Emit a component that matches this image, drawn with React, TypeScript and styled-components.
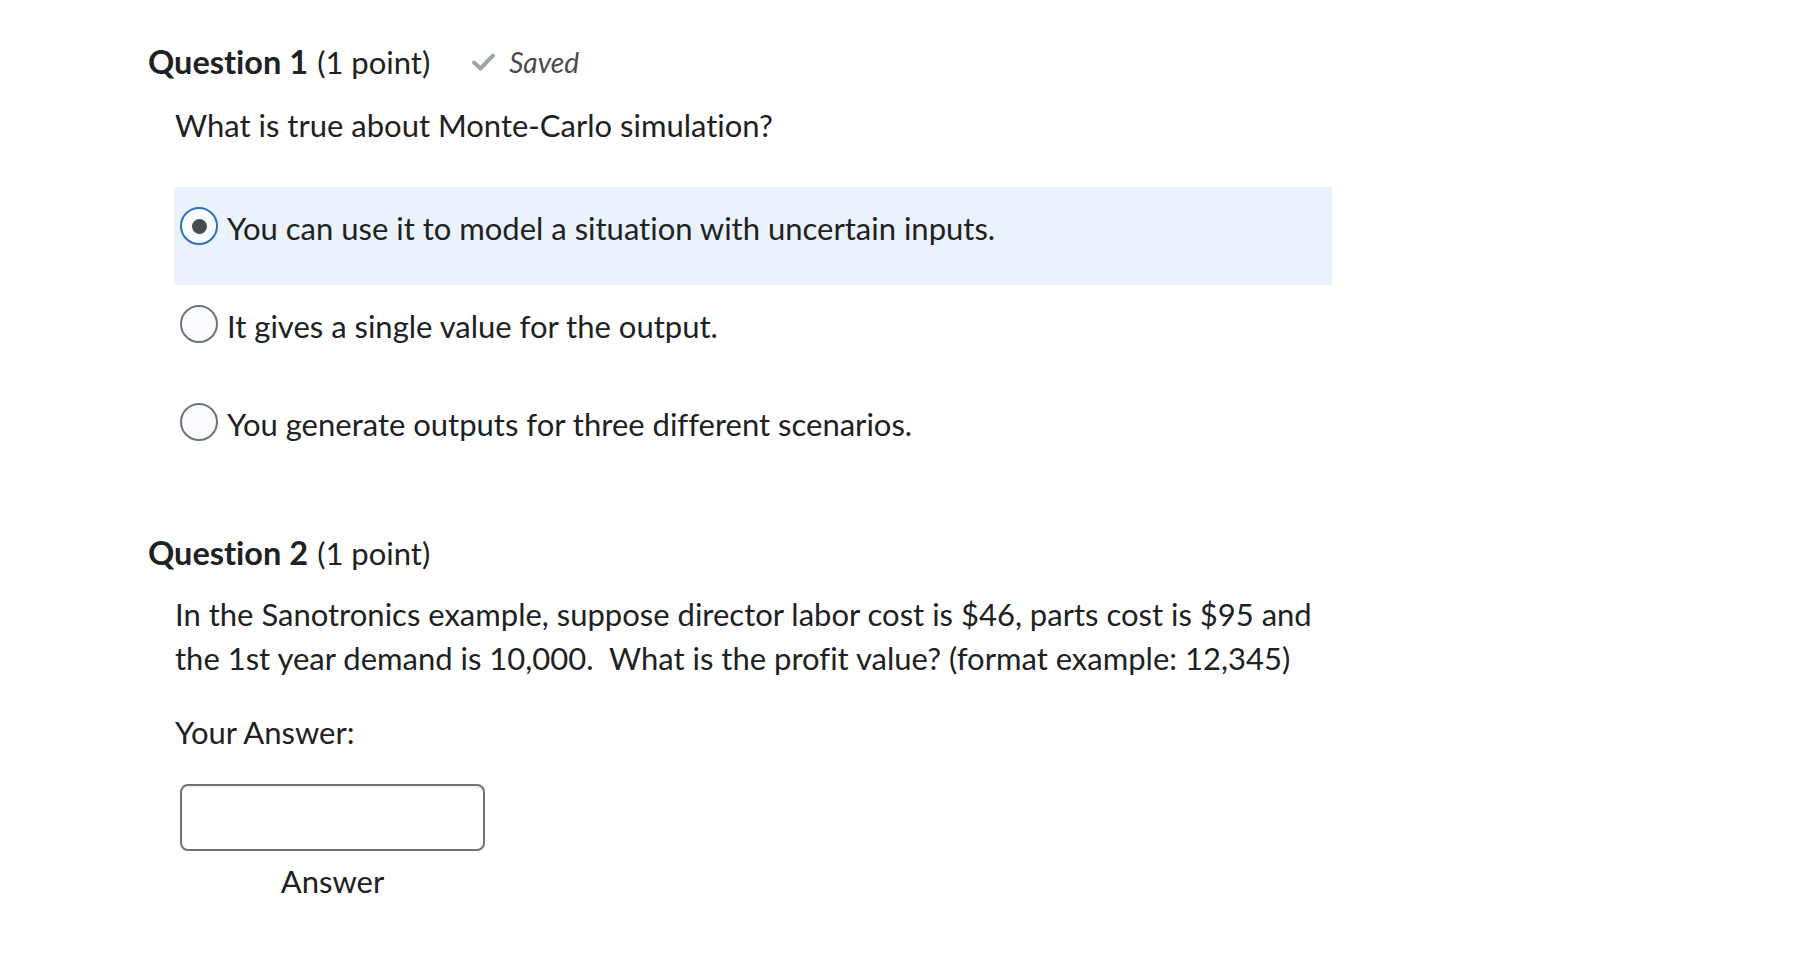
import React from "react";
import styled, { createGlobalStyle } from "styled-components";

const Global = createGlobalStyle`
  html, body { margin: 0; padding: 0; background: #ffffff; }
  body {
    font-family: Lato, "Noto Sans", sans-serif;
    color: #202122;
    font-variant-ligatures: none;
  }
`;

const Page = styled.main`
  padding: 40px 0 60px 148px;
  width: 1200px;
`;

const QuestionHeader = styled.h2<{ $top?: number }>`
  margin: ${(p) => p.$top ?? 0}px 0 0 0;
  display: flex;
  align-items: center;
  font-size: 31px;
  line-height: 44px;
  font-weight: 400;
  color: #202122;
`;

const Strong = styled.span`
  font-weight: 700;
  font-size: 32.5px;
  margin-right: 9px;
`;

const SavedTag = styled.span`
  display: inline-flex;
  align-items: center;
  margin-left: 41px;
  gap: 13px;
  font-style: italic;
  font-size: 28px;
  color: #494c4e;
`;

const Indented = styled.div`
  margin-left: 28px;
`;

const Prompt = styled.p<{ $top: number }>`
  margin: ${(p) => p.$top}px 0 0 -1px;
  font-size: 31px;
  line-height: 44px;
  width: 1160px;
`;

const OptionList = styled.div`
  margin-top: 40px;
  width: 1158px;
  margin-left: -2px;
  display: flex;
  flex-direction: column;
`;

const OptionRow = styled.label<{ $selected?: boolean }>`
  height: 98px;
  box-sizing: border-box;
  padding: 20px 0 0 6px;
  display: flex;
  align-items: flex-start;
  gap: 9px;
  background: ${(p) => (p.$selected ? "#eaf2fb" : "transparent")};
  font-size: 31px;
  line-height: 38px;
`;

const Radio = styled.span<{ $checked?: boolean }>`
  flex: none;
  width: 38px;
  height: 38px;
  box-sizing: border-box;
  border-radius: 50%;
  border: 2px solid ${(p) => (p.$checked ? "#2d6fc4" : "#6e7376")};
  background: #f9fbff;
  display: flex;
  align-items: center;
  justify-content: center;
  &::after {
    content: "";
    display: ${(p) => (p.$checked ? "block" : "none")};
    width: 15px;
    height: 15px;
    border-radius: 50%;
    background: #494c4e;
  }
`;

const OptionText = styled.span`
  margin-top: 2px;
`;

const AnswerBlock = styled.div`
  margin-top: 30px;
  margin-left: 4px;
  width: 305px;
  display: flex;
  flex-direction: column;
  align-items: center;
`;

const AnswerInput = styled.input`
  width: 305px;
  height: 67px;
  box-sizing: border-box;
  border: 2px solid #6e7376;
  border-radius: 8px;
  background: #ffffff;
  box-shadow: inset 0 2px 0 0 rgba(185, 194, 208, 0.2);
  outline: none;
  font-family: Lato, sans-serif;
  font-size: 31px;
  padding: 0 12px;
`;

const AnswerLabel = styled.span`
  margin-top: 8px;
  font-size: 31px;
  line-height: 44px;
`;

const Check = () => (
  <svg width="25" height="20" viewBox="0 0 25 20" aria-hidden="true">
    <path d="M3 10.5 L9.5 16.5 L22 3.5" fill="none" stroke="#9ea5a9" strokeWidth="4" strokeLinecap="round" strokeLinejoin="round" />
  </svg>
);

const options = [
  { text: "You can use it to model a situation with uncertain inputs.", checked: true },
  { text: "It gives a single value for the output.", checked: false },
  { text: "You generate outputs for three different scenarios.", checked: false },
];

export default function App() {
  return (
    <>
      <Global />
      <Page>
        <QuestionHeader>
          <Strong>Question 1</Strong>(1 point)
          <SavedTag>
            <Check />
            Saved
          </SavedTag>
        </QuestionHeader>
        <Indented>
          <Prompt $top={19}>What is true about Monte-Carlo simulation?</Prompt>
          <OptionList>
            {options.map((o) => (
              <OptionRow key={o.text} $selected={o.checked}>
                <Radio $checked={o.checked} />
                <OptionText>{o.text}</OptionText>
              </OptionRow>
            ))}
          </OptionList>
        </Indented>
        <QuestionHeader $top={50}>
          <Strong>Question 2</Strong>(1 point)
        </QuestionHeader>
        <Indented>
          <Prompt $top={17}>
            In the Sanotronics example, suppose director labor cost is $46, parts cost is $95 and the 1st year demand is 10,000.&nbsp; What is the profit value? (format example: 12,345)
          </Prompt>
          <Prompt $top={30}>Your Answer:</Prompt>
          <AnswerBlock>
            <AnswerInput type="text" aria-label="Answer" />
            <AnswerLabel>Answer</AnswerLabel>
          </AnswerBlock>
        </Indented>
      </Page>
    </>
  );
}
